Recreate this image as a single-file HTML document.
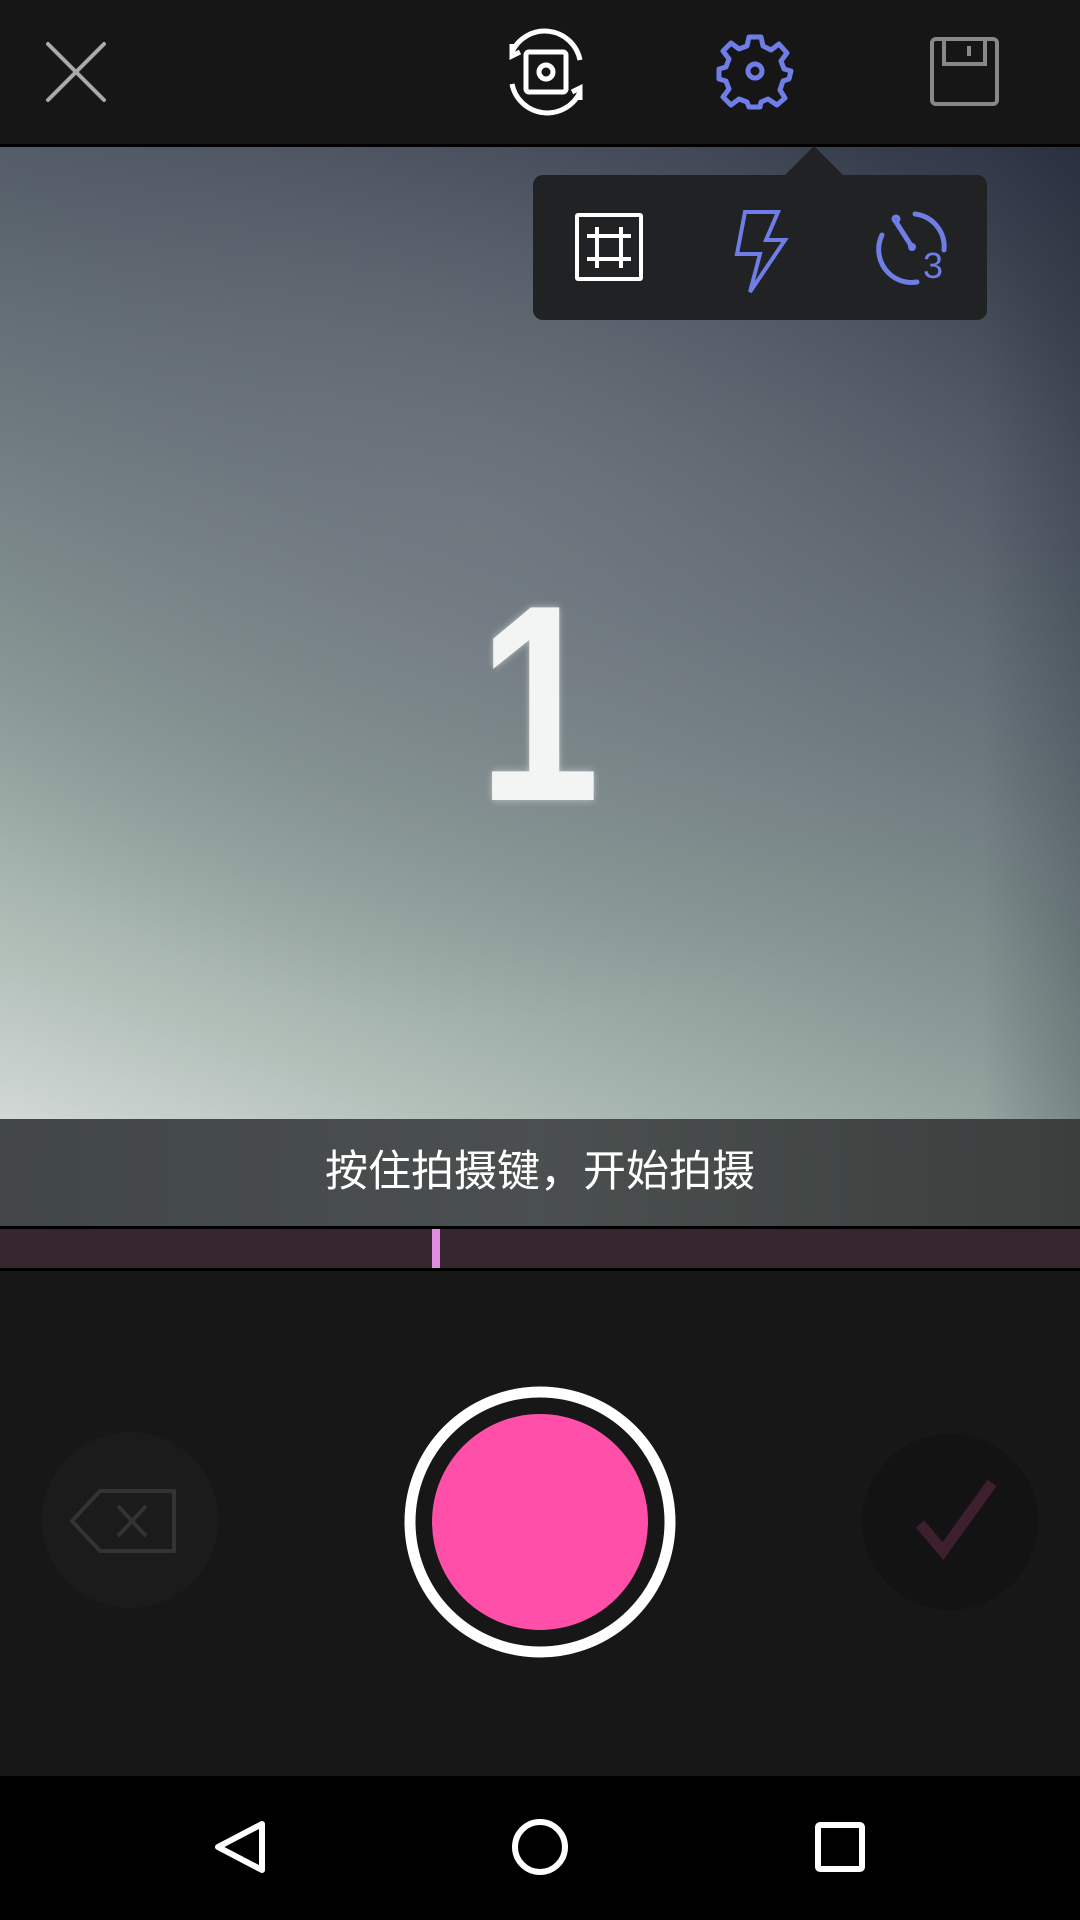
<!DOCTYPE html>
<html><head><meta charset="utf-8"><style>
html,body{margin:0;padding:0;width:1080px;height:1920px;overflow:hidden;background:#171717;font-family:"Liberation Sans","Noto Sans CJK SC",sans-serif;}
.abs{position:absolute}
</style></head><body>
<div class="abs" style="left:0;top:0;width:1080px;height:144px;background:#161616"></div>
<div class="abs" style="left:0;top:144px;width:1080px;height:3px;background:#000"></div>
<div class="abs" style="left:0;top:147px;width:1080px;height:972px;background:
radial-gradient(ellipse 900px 700px at 480px 380px, rgba(120,125,135,0.5), rgba(0,0,0,0) 70%),
linear-gradient(200deg,#2e3444 0%,#4c5460 22%,#68737a 45%,#8a9a96 68%,#b3c0ba 88%,#d2d8d6 100%);"></div>
<div class="abs" style="left:980px;top:147px;width:100px;height:972px;background:linear-gradient(90deg,rgba(0,0,0,0),rgba(20,30,40,0.2))"></div>
<svg class="abs" style="left:0;top:0" width="1080" height="1920">
 <g stroke="#aaa" stroke-width="4" stroke-linecap="round"><line x1="48" y1="44" x2="104" y2="100"/><line x1="104" y1="44" x2="48" y2="100"/></g>
 <g stroke="#fff" stroke-width="5" fill="none">
  <rect x="526" y="52" width="40" height="40" rx="3"/>
  <circle cx="546" cy="72" r="7"/>
  <path d="M512 52 A36 36 0 0 1 580 60"/>
  <path d="M580 92 A36 36 0 0 1 512 84"/>
  <path d="M512 44 L512 56 L520 52"/>
  <path d="M580 100 L580 88 L572 92"/>
 </g>
 <g transform="translate(755,71)" fill="none" stroke="#6f7de6" stroke-width="5" stroke-linejoin="round">
  <path d="M-6,-34 L6,-34 L8,-25 L16,-21 L24,-27 L32,-18 L26,-10 L29,-2 L36,0 L34,8 L28,10 L25,19 L30,27 L22,34 L13,28 L6,31 L5,36 L-6,36 L-8,31 L-16,28 L-24,34 L-32,26 L-26,18 L-29,10 L-36,8 L-36,-2 L-29,-4 L-26,-12 L-32,-20 L-24,-28 L-16,-22 L-8,-25 Z"/>
  <circle cx="0" cy="0" r="7"/>
 </g>
 <g stroke="#888" stroke-width="4" fill="none">
  <rect x="932" y="39" width="65" height="65" rx="4"/>
  <path d="M944 39 V64 H985 V39"/>
  <line x1="969" y1="46" x2="969" y2="56"/>
 </g>
 <path d="M784 176 L814 146 L844 176 Z" fill="#212224"/>
 <rect x="533" y="175" width="454" height="145" rx="10" fill="#212224"/>
 <g stroke="#fff" stroke-width="4" fill="none">
  <rect x="577" y="215" width="64" height="64" rx="1"/>
  <line x1="597" y1="227" x2="597" y2="268"/><line x1="621" y1="227" x2="621" y2="268"/>
  <line x1="587" y1="236" x2="631" y2="236"/><line x1="587" y1="259" x2="631" y2="259"/>
 </g>
 <path d="M745 212 L778 212 L766 240 L785 240 L750 292 L760 254 L737 254 Z" fill="none" stroke="#6f7de6" stroke-width="4" stroke-linejoin="miter"/>
 <g stroke="#6f7de6" stroke-width="5" fill="none" stroke-linecap="round">
  <path d="M915 214 A33 33 0 0 1 944 250"/>
  <path d="M882 235 A33 33 0 0 0 917 282"/>
  <line x1="896" y1="222" x2="912" y2="247"/>
  <circle cx="896" cy="219" r="2"/>
 </g>
 <circle cx="912" cy="247" r="4" fill="#6f7de6"/>
 <text x="933" y="278" font-family="Liberation Sans" font-size="36" fill="#6f7de6" text-anchor="middle">3</text>
 <g transform="translate(539,800) scale(0.78,1)">
 <text x="0" y="0" font-family="Liberation Sans" font-weight="bold" font-size="280" fill="#f3f4f4" text-anchor="middle" style="filter:drop-shadow(0 0 4px rgba(255,255,255,0.5))">1</text>
 </g>
</svg>
<div class="abs" style="left:0;top:1119px;width:1080px;height:107px;background:linear-gradient(90deg,rgba(70,75,75,0.9),rgba(80,85,85,0.9) 50%,rgba(60,65,64,0.95));color:#fff;font-size:43px;line-height:107px;text-align:center;font-family:'Liberation Sans','Noto Sans CJK SC',sans-serif">按住拍摄键，开始拍摄</div>
<div class="abs" style="left:0;top:1226px;width:1080px;height:3px;background:#000"></div>
<div class="abs" style="left:0;top:1229px;width:1080px;height:39px;background:#35262f"></div>
<div class="abs" style="left:432px;top:1229px;width:8px;height:39px;background:#e08ee0"></div>
<div class="abs" style="left:0;top:1268px;width:1080px;height:3px;background:#000"></div>
<svg class="abs" style="left:0;top:1271px" width="1080" height="649">
 <circle cx="130" cy="249" r="88" fill="#1b1b1b"/>
 <circle cx="950" cy="251" r="88" fill="#131313"/>
 <g stroke="#333" stroke-width="4" fill="none" stroke-linejoin="round">
  <path d="M100 220 H174 V280 H100 L72 250 Z"/>
  <line x1="118" y1="235" x2="146" y2="265"/><line x1="146" y1="235" x2="118" y2="265"/>
 </g>
 <path d="M920 253 L943 280 L992 212" stroke="#3e1f2d" stroke-width="11" fill="none"/>
 <circle cx="540" cy="251" r="130" fill="none" stroke="#fff" stroke-width="11"/>
 <circle cx="540" cy="251" r="108" fill="#ff4fa9"/>
 <rect x="0" y="505" width="1080" height="144" fill="#000"/>
 <path d="M262 553 L218 576 L262 599 Z" fill="none" stroke="#fff" stroke-width="6" stroke-linejoin="round"/>
 <circle cx="540" cy="576" r="25" fill="none" stroke="#fff" stroke-width="6"/>
 <rect x="818" y="554" width="44" height="44" rx="2" fill="none" stroke="#fff" stroke-width="6"/>
</svg>
</body></html>
